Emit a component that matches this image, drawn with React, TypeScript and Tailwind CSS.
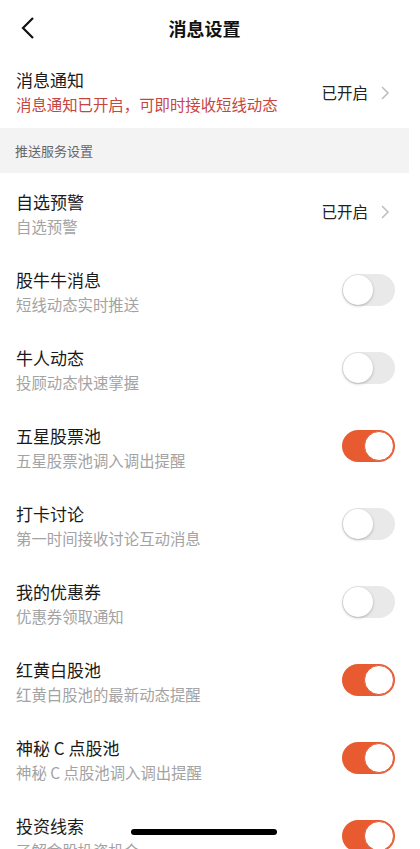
import React from "react";

const font = { fontFamily: '"PingFang SC","Noto Sans CJK SC","Noto Sans",sans-serif' };

function Toggle({ on }: { on: boolean }) {
  return on ? (
    <div className="w-[53px] h-[32px] rounded-full bg-[#e85b31] flex items-center justify-end pr-[1px]">
      <div className="w-[30px] h-[30px] rounded-full bg-white border border-[#e0603a]" />
    </div>
  ) : (
    <div className="w-[53px] h-[32px] rounded-full bg-[#e9e9e9] flex items-center pl-[1px]">
      <div className="w-[30px] h-[30px] rounded-full bg-white shadow-[0_1px_3px_rgba(0,0,0,0.25)]" />
    </div>
  );
}

function Chevron() {
  return (
    <svg width="10" height="16" viewBox="0 0 10 16" className="ml-[12px]">
      <path d="M2 2 L8 8 L2 14" fill="none" stroke="#bdbdbd" strokeWidth="1.5" />
    </svg>
  );
}

const rows: { t: string; s: string; on?: boolean }[] = [
  { t: "股牛牛消息", s: "短线动态实时推送", on: false },
  { t: "牛人动态", s: "投顾动态快速掌握", on: false },
  { t: "五星股票池", s: "五星股票池调入调出提醒", on: true },
  { t: "打卡讨论", s: "第一时间接收讨论互动消息", on: false },
  { t: "我的优惠券", s: "优惠券领取通知", on: false },
  { t: "红黄白股池", s: "红黄白股池的最新动态提醒", on: true },
  { t: "神秘 C 点股池", s: "神秘 C 点股池调入调出提醒", on: true },
  { t: "投资线索", s: "了解金股投资机会", on: true },
];

export default function App() {
  return (
    <div className="w-[409px] bg-white" style={font}>
      <div className="h-[56px] flex items-center relative">
        <svg width="16" height="24" viewBox="0 0 16 24" className="absolute left-[20px] top-[16px]">
          <path d="M13 2 L3 12 L13 22" fill="none" stroke="#111" strokeWidth="2.2" />
        </svg>
        <div className="flex-1 text-center text-[18px] font-bold text-[#111]">消息设置</div>
      </div>
      <div className="h-[72px] flex items-center justify-between pl-[16px] pr-[19px]">
        <div className="flex flex-col">
          <div className="text-[17px] leading-[24px] text-[#1a1a1a]">消息通知</div>
          <div className="text-[15.4px] leading-[24px] text-[#c7453f]">消息通知已开启，可即时接收短线动态</div>
        </div>
        <div className="flex items-center mt-[2px]">
          <span className="text-[15.5px] text-[#222]">已开启</span>
          <Chevron />
        </div>
      </div>
      <div className="h-[45px] bg-[#f3f3f3] flex items-center pl-[15px] text-[13px] text-[#666]">推送服务设置</div>
      <div className="h-[78px] flex items-center justify-between pl-[16px] pr-[19px]">
        <div className="flex flex-col mt-[4px]">
          <div className="text-[17px] leading-[24px] text-[#1a1a1a]">自选预警</div>
          <div className="text-[15.4px] leading-[24px] text-[#a3a3a3]">自选预警</div>
        </div>
        <div className="flex items-center">
          <span className="text-[15.5px] text-[#222]">已开启</span>
          <Chevron />
        </div>
      </div>
      {rows.map((r) => (
        <div key={r.t} className="h-[78px] flex items-center justify-between pl-[16px] pr-[14px]">
          <div className="flex flex-col mt-[4px]">
            <div className="text-[17px] leading-[24px] text-[#1a1a1a]">{r.t}</div>
            <div className="text-[15.4px] leading-[24px] text-[#a3a3a3]">{r.s}</div>
          </div>
          <Toggle on={!!r.on} />
        </div>
      ))}
      <div className="fixed left-[131px] top-[829px] w-[146px] h-[6px] rounded-full bg-black" />
    </div>
  );
}
